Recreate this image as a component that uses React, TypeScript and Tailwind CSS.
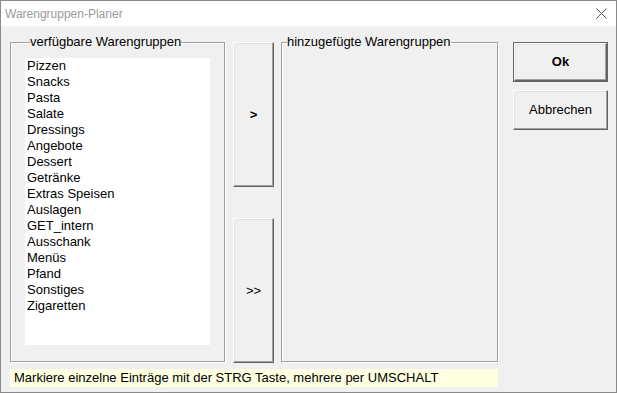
import React from 'react';

const gruppen = [
  'Pizzen',
  'Snacks',
  'Pasta',
  'Salate',
  'Dressings',
  'Angebote',
  'Dessert',
  'Getränke',
  'Extras Speisen',
  'Auslagen',
  'GET_intern',
  'Ausschank',
  'Menüs',
  'Pfand',
  'Sonstiges',
  'Zigaretten',
];

const font = { fontFamily: '"Liberation Sans", Arial, sans-serif' };

function Knopf({ children, className = '' }: { children: React.ReactNode; className?: string }) {
  return (
    <button
      className={`flex items-center justify-center bg-[#f0f0f0] border border-t-white border-l-white border-r-[#646464] border-b-[#646464] shadow-[inset_-1px_-1px_0_#a0a0a0,inset_1px_1px_0_#e3e3e3] text-[13px] text-black ${className}`}
    >
      {children}
    </button>
  );
}

export default function App() {
  return (
    <div
      className="w-[617px] h-[393px] border border-[#8a8a8a] bg-[#f0f0f0] flex flex-col text-black"
      style={font}
    >
      {/* Titelleiste */}
      <div className="h-[25px] bg-white flex items-center justify-between pl-[4px] pr-[9px]">
        <span className="text-[12px] text-[#999999]">Warengruppen-Planer</span>
        <svg width="11" height="11" viewBox="0 0 11 11">
          <path d="M0.5 0.5 L10.5 10.5 M10.5 0.5 L0.5 10.5" stroke="#555" strokeWidth="1" />
        </svg>
      </div>

      <div className="flex-1 pl-[9px] pt-[9px]">
        <div className="flex items-start">
          <fieldset className="w-[215px] h-[327px] border border-[#a0a0a0] shadow-[inset_1px_1px_0_white,1px_1px_0_white] pl-[14px] pr-[14px]">
            <legend className="ml-[5px] text-[13px] leading-[14px] px-0">verfügbare Warengruppen</legend>
            <ul className="mt-[9px] h-[287px] bg-white pl-[2px] pt-0">
              {gruppen.map((g) => (
                <li key={g} className="text-[13px] leading-[16px]">
                  {g}
                </li>
              ))}
            </ul>
          </fieldset>

          <div className="ml-[8px] mt-[7px] flex flex-col gap-[31px]">
            <Knopf className="w-[41px] h-[145px] font-bold">&gt;</Knopf>
            <Knopf className="w-[41px] h-[145px]">&gt;&gt;</Knopf>
          </div>

          <fieldset className="ml-[7px] w-[217px] h-[327px] border border-[#a0a0a0] shadow-[inset_1px_1px_0_white,1px_1px_0_white]">
            <legend className="ml-[5px] text-[13px] leading-[14px] px-0">hinzugefügte Warengruppen</legend>
          </fieldset>

          <div className="ml-[15px] mt-[7px] flex flex-col gap-[8px]">
            <div className="border border-[#646464]">
              <Knopf className="w-[93px] h-[38px] font-bold">Ok</Knopf>
            </div>
            <Knopf className="w-[95px] h-[40px]">Abbrechen</Knopf>
          </div>
        </div>

        <div className="mt-[6px] w-[488px] h-[18px] bg-[#ffffe1] flex items-center pl-[4px] text-[13px]">
          Markiere einzelne Einträge mit der STRG Taste, mehrere per UMSCHALT
        </div>
      </div>
    </div>
  );
}
